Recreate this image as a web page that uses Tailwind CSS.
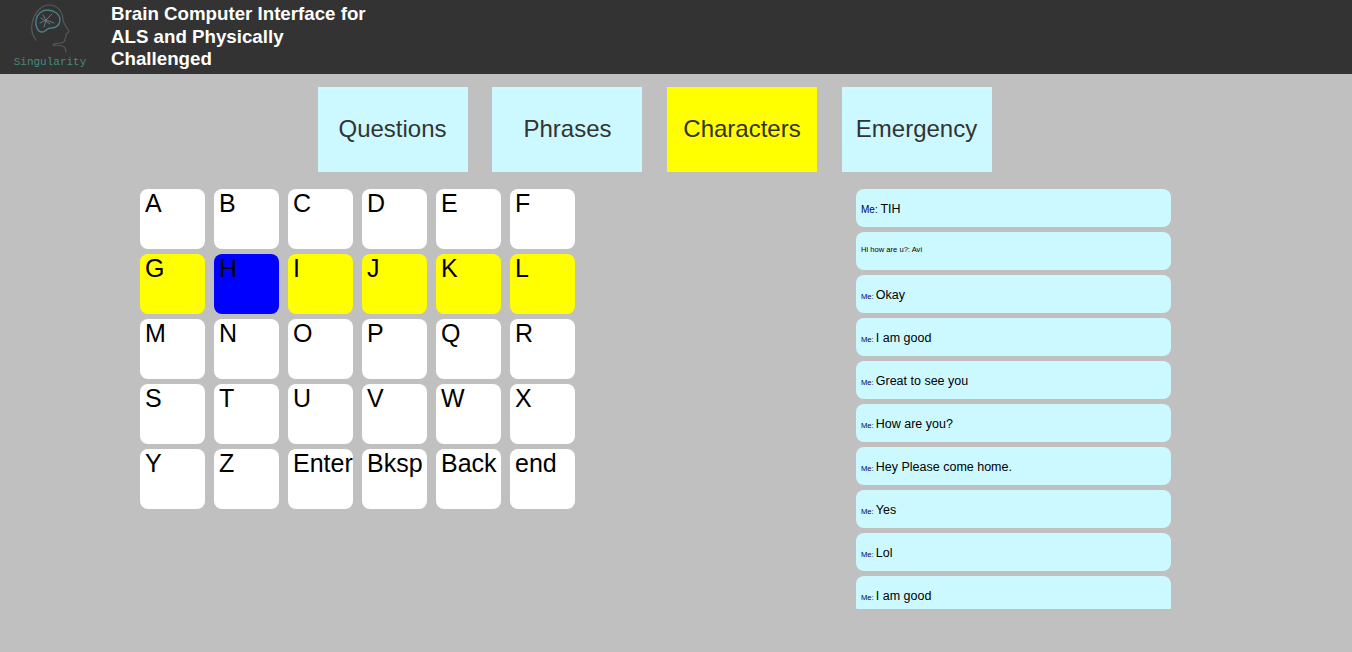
<!DOCTYPE html>
<html lang="en">
  <head>
    <meta charset="UTF-8" />
    <title>Brain Computer Interface</title>
    <script src="https://cdn.jsdelivr.net/npm/@tailwindcss/browser@4"></script>
  </head>
  <body class="h-[652px] overflow-hidden bg-[#c0c0c0] font-['Liberation_Sans',sans-serif]">
    <!-- header -->
    <header class="flex h-[74px] bg-[#333333]">
      <div class="w-[100px] shrink-0 flex flex-col items-center">
        <svg width="100" height="54" viewBox="0 0 100 54" fill="none" stroke-linecap="round" stroke-linejoin="round">
          <path d="M36 40C32 35 31 30 32 24C34 12 42 5 49 5C57 5 63 11 63 20C64 24 66 27 69 31C69 33 66 33 66 35C67 37 66 38 65 39C65 42 63 43 60 43C57 43 54 43 53 45M53 45C58 45 64 45 65 48L66 52" stroke="#55595b" stroke-width="1.2" />
          <path d="M36 20C37 14 42 10 47 10C54 10 60 14 60 20C60 25 56 28 51 28C46 28 46 32 42 32C38 32 35 27 36 20Z" stroke="#47808e" stroke-width="1.4" />
          <path d="M40 23L46 20L52 14M46 20L54 23M46 20L44 27M46 20L43 15M41 18L50 24" stroke="#5f7d86" stroke-width="1" />
        </svg>
        <span class="font-['Liberation_Mono',monospace] text-[11px] leading-[14px] mt-[1px] text-[#458a82]">Singularity</span>
      </div>
      <h1 class="w-[275px] ml-[11px] pt-[3px] text-[18.72px] leading-[22.5px] font-bold text-white">Brain Computer Interface for ALS and Physically Challenged</h1>
    </header>

    <!-- tabs -->
    <nav class="flex mt-[13px] ml-[318px] gap-[24px] text-[24px] text-[#333333]">
      <div class="w-[150px] h-[85px] pb-[2px] pr-[1px] flex items-center justify-center bg-[#ccf9ff]">Questions</div>
      <div class="w-[150px] h-[85px] pb-[2px] pl-[1px] flex items-center justify-center bg-[#ccf9ff]">Phrases</div>
      <div class="w-[150px] h-[85px] pb-[2px] ml-[1px] flex items-center justify-center bg-[#ffff00]">Characters</div>
      <div class="w-[150px] h-[85px] pb-[2px] pr-[1px] ml-[1px] flex items-center justify-center bg-[#ccf9ff]">Emergency</div>
    </nav>

    <main class="flex mt-[17px]">
      <!-- keyboard -->
      <div class="ml-[140px] w-[716px] shrink-0">
        <div class="grid grid-cols-[repeat(6,65px)] auto-rows-[60px] gap-x-[9px] gap-y-[5px] text-[25px] leading-[29px] text-black">
          <div class="rounded-lg bg-white pl-[5px] whitespace-nowrap">A</div>
          <div class="rounded-lg bg-white pl-[5px] whitespace-nowrap">B</div>
          <div class="rounded-lg bg-white pl-[5px] whitespace-nowrap">C</div>
          <div class="rounded-lg bg-white pl-[5px] whitespace-nowrap">D</div>
          <div class="rounded-lg bg-white pl-[5px] whitespace-nowrap">E</div>
          <div class="rounded-lg bg-white pl-[5px] whitespace-nowrap">F</div>
          <div class="rounded-lg bg-[#ffff00] pl-[5px] whitespace-nowrap">G</div>
          <div class="rounded-lg bg-[#0000ff] pl-[5px] whitespace-nowrap">H</div>
          <div class="rounded-lg bg-[#ffff00] pl-[5px] whitespace-nowrap">I</div>
          <div class="rounded-lg bg-[#ffff00] pl-[5px] whitespace-nowrap">J</div>
          <div class="rounded-lg bg-[#ffff00] pl-[5px] whitespace-nowrap">K</div>
          <div class="rounded-lg bg-[#ffff00] pl-[5px] whitespace-nowrap">L</div>
          <div class="rounded-lg bg-white pl-[5px] whitespace-nowrap">M</div>
          <div class="rounded-lg bg-white pl-[5px] whitespace-nowrap">N</div>
          <div class="rounded-lg bg-white pl-[5px] whitespace-nowrap">O</div>
          <div class="rounded-lg bg-white pl-[5px] whitespace-nowrap">P</div>
          <div class="rounded-lg bg-white pl-[5px] whitespace-nowrap">Q</div>
          <div class="rounded-lg bg-white pl-[5px] whitespace-nowrap">R</div>
          <div class="rounded-lg bg-white pl-[5px] whitespace-nowrap">S</div>
          <div class="rounded-lg bg-white pl-[5px] whitespace-nowrap">T</div>
          <div class="rounded-lg bg-white pl-[5px] whitespace-nowrap">U</div>
          <div class="rounded-lg bg-white pl-[5px] whitespace-nowrap">V</div>
          <div class="rounded-lg bg-white pl-[5px] whitespace-nowrap">W</div>
          <div class="rounded-lg bg-white pl-[5px] whitespace-nowrap">X</div>
          <div class="rounded-lg bg-white pl-[5px] whitespace-nowrap">Y</div>
          <div class="rounded-lg bg-white pl-[5px] whitespace-nowrap">Z</div>
          <div class="rounded-lg bg-white pl-[5px] whitespace-nowrap">Enter</div>
          <div class="rounded-lg bg-white pl-[5px] whitespace-nowrap">Bksp</div>
          <div class="rounded-lg bg-white pl-[5px] whitespace-nowrap">Back</div>
          <div class="rounded-lg bg-white pl-[5px] whitespace-nowrap">end</div>
        </div>
      </div>

      <!-- chat log -->
      <div class="w-[315px] h-[420px] overflow-hidden flex flex-col gap-[5px] text-[12.5px] text-black">
        <div class="h-[38px] shrink-0 rounded-lg bg-[#ccf9ff] pl-[5px] pt-[12px] leading-[16px]"><span class="text-[10px] text-[#000060]">Me: </span>TIH</div>
        <div class="h-[38px] shrink-0 rounded-lg bg-[#ccf9ff] pl-[5px] pt-[12px] leading-[11px] text-[7.6px]">Hi how are u?: Avi</div>
        <div class="h-[38px] shrink-0 rounded-lg bg-[#ccf9ff] pl-[5px] pt-[12px] leading-[16px]"><span class="text-[7.6px] text-[#000060]">Me: </span>Okay</div>
        <div class="h-[38px] shrink-0 rounded-lg bg-[#ccf9ff] pl-[5px] pt-[12px] leading-[16px]"><span class="text-[7.6px] text-[#000060]">Me: </span>I am good</div>
        <div class="h-[38px] shrink-0 rounded-lg bg-[#ccf9ff] pl-[5px] pt-[12px] leading-[16px]"><span class="text-[7.6px] text-[#000060]">Me: </span>Great to see you</div>
        <div class="h-[38px] shrink-0 rounded-lg bg-[#ccf9ff] pl-[5px] pt-[12px] leading-[16px]"><span class="text-[7.6px] text-[#000060]">Me: </span>How are you?</div>
        <div class="h-[38px] shrink-0 rounded-lg bg-[#ccf9ff] pl-[5px] pt-[12px] leading-[16px]"><span class="text-[7.6px] text-[#000060]">Me: </span>Hey Please come home.</div>
        <div class="h-[38px] shrink-0 rounded-lg bg-[#ccf9ff] pl-[5px] pt-[12px] leading-[16px]"><span class="text-[7.6px] text-[#000060]">Me: </span>Yes</div>
        <div class="h-[38px] shrink-0 rounded-lg bg-[#ccf9ff] pl-[5px] pt-[12px] leading-[16px]"><span class="text-[7.6px] text-[#000060]">Me: </span>Lol</div>
        <div class="h-[38px] shrink-0 rounded-lg bg-[#ccf9ff] pl-[5px] pt-[12px] leading-[16px]"><span class="text-[7.6px] text-[#000060]">Me: </span>I am good</div>
      </div>
    </main>
  </body>
</html>
